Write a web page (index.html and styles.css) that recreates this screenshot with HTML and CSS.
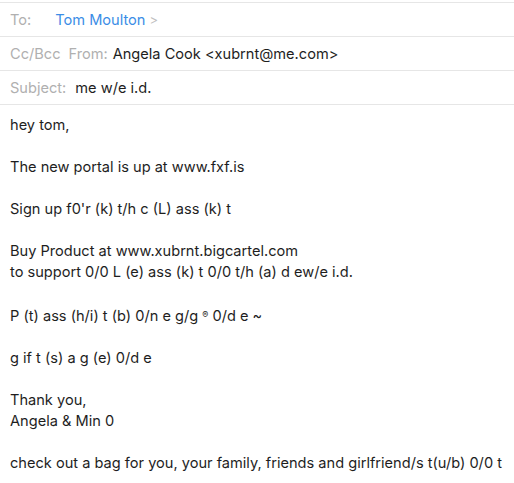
FILE: index.html
```html
<!DOCTYPE html>
<html>
<head>
<meta charset="utf-8">
<link rel="stylesheet" href="styles.css">
</head>
<body>
<div class="header">
  <div class="row"><span class="label">To:</span><span class="to">Tom Moulton</span><span class="chev">&gt;</span></div>
  <div class="row"><span class="label">Cc/Bcc</span><span class="label from">From:</span><span class="val">Angela Cook &lt;xubrnt@me.com&gt;</span></div>
  <div class="row"><span class="label">Subject:</span><span class="val subj">me w/e i.d.</span></div>
</div>
<div class="body">
<p>hey tom,</p>
<p>The new portal is up at www.fxf.is</p>
<p>Sign up f0'r (k) t/h c (L) ass (k) t</p>
<p>Buy Product at www.xubrnt.bigcartel.com<br>to support 0/0 L (e) ass (k) t 0/0 t/h (a) d ew/e i.d.</p>
<p>P (t) ass (h/i) t (b) 0/n e g/g <span class="reg">®</span> 0/d e ~</p>
<p>g if t (s) a g (e) 0/d e</p>
<p>Thank you,<br>Angela &amp; Min 0</p>
<p>check out a bag for you, your family, friends and girlfriend/s t(u/b) 0/0 t</p>
</div>
</body>
</html>
```
FILE: styles.css
```css
html, body { margin: 0; padding: 0; background: #fff; }
body {
  font-family: Inter, "Liberation Sans", sans-serif;
  font-size: 14.6px;
  color: #1e1e1e;
  padding-top: 2px;
}
.header { border-top: 1px solid #e6e6e6; }
.row {
  height: 33px;
  border-bottom: 1px solid #e6e6e6;
  display: flex;
  align-items: center;
  padding-left: 10px;
}
.label { color: #b0b0b0; margin-right: 5px; }
.from { margin-left: 3px; }
.to { color: #3b8de6; margin-left: 19px; }
.chev { color: #c0c0c0; margin-left: 4px; font-size: 13px; }
.subj { margin-left: 4px; }
.body { padding: 10px 10px 0 10px; line-height: 21px; }
.body p { margin: 0 0 21px 0; }
.reg { font-size: 9px; vertical-align: 3px; }
```
